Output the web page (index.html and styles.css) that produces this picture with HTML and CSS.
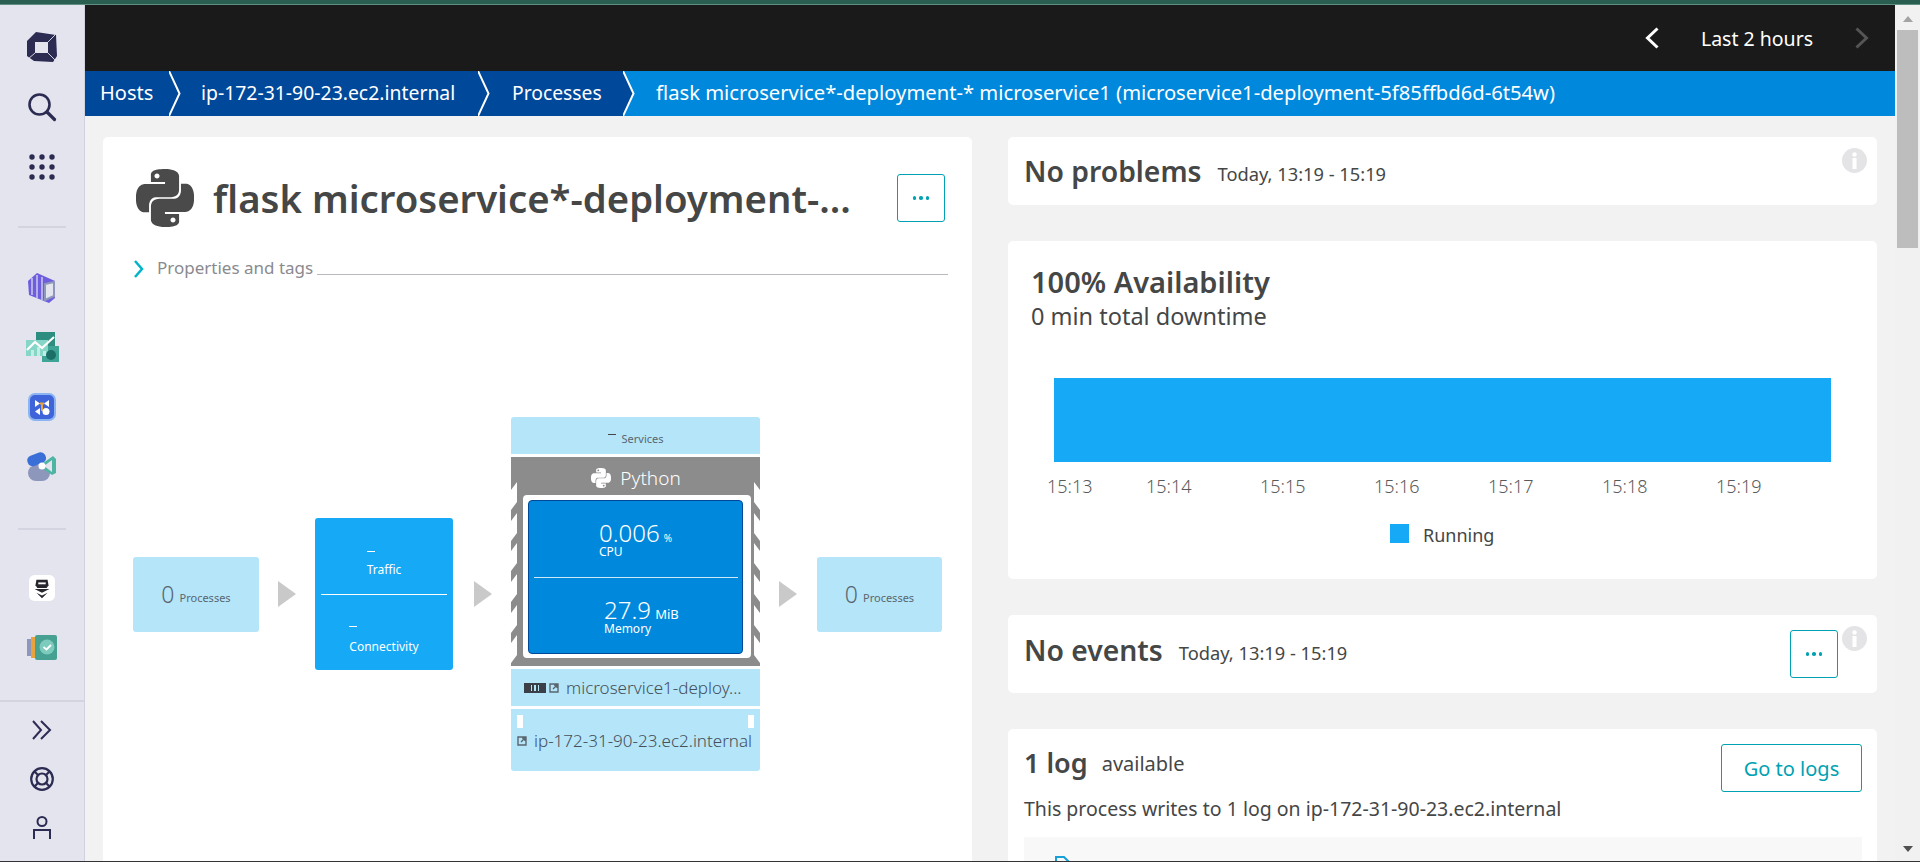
FILE: index.html
```html
<!DOCTYPE html>
<html lang="en">
<head>
<meta charset="utf-8">
<title>flask microservice</title>
<link rel="stylesheet" href="styles.css">
</head>
<body>
<svg class="defs" width="0" height="0"><defs>
<path id="py" d="M14.25.18l.9.2.73.26.59.3.45.32.34.34.25.34.16.33.1.3.04.26.02.2-.01.13V8.5l-.05.63-.13.55-.21.46-.26.38-.3.31-.33.25-.35.19-.35.14-.33.1-.3.07-.26.04-.21.02H8.77l-.69.05-.59.14-.5.22-.41.27-.33.32-.27.35-.2.36-.15.37-.1.35-.07.32-.04.27-.02.21v3.06H3.17l-.21-.03-.28-.07-.32-.12-.35-.18-.36-.26-.36-.36-.35-.46-.32-.59-.28-.73-.21-.88-.14-1.05-.05-1.23.06-1.22.16-1.04.24-.87.32-.71.36-.57.4-.44.42-.33.42-.24.4-.16.36-.1.32-.05.24-.01h.16l.06.01h8.16v-.83H6.18l-.01-2.75-.02-.37.05-.34.11-.31.17-.28.25-.26.31-.23.38-.2.44-.18.51-.15.58-.12.64-.1.71-.06.77-.04.84-.02 1.27.05zm-6.3 1.98l-.23.33-.08.41.08.41.23.34.33.22.41.09.41-.09.33-.22.23-.34.08-.41-.08-.41-.23-.33-.33-.22-.41-.09-.41.09zm13.09 3.95l.28.06.32.12.35.18.36.27.36.35.35.47.32.59.28.73.21.88.14 1.04.05 1.23-.06 1.23-.16 1.04-.24.86-.32.71-.36.57-.4.45-.42.33-.42.24-.4.16-.36.09-.32.05-.24.02-.16-.01h-8.22v.82h5.84l.01 2.76.02.36-.05.34-.11.31-.17.29-.25.25-.31.24-.38.2-.44.17-.51.15-.58.13-.64.09-.71.07-.77.04-.84.01-1.27-.04-1.07-.14-.9-.2-.73-.25-.59-.3-.45-.33-.34-.34-.25-.34-.16-.33-.1-.3-.04-.25-.02-.2.01-.13v-5.34l.05-.64.13-.54.21-.46.26-.38.3-.32.33-.24.35-.2.35-.14.33-.1.3-.06.26-.04.21-.02.13-.01h5.84l.69-.05.59-.14.5-.21.41-.28.33-.32.27-.35.2-.36.15-.36.1-.35.07-.32.04-.28.02-.21V6.07h2.09l.14.01zm-6.47 14.25l-.23.33-.08.41.08.41.23.33.33.23.41.08.41-.08.33-.23.23-.33.08-.41-.08-.41-.23-.33-.33-.23-.41-.08-.41.08z"/>
<g id="info"><circle cx="12.5" cy="12.5" r="12.5" fill="#e4e4e6"/><circle cx="12.5" cy="6.5" r="2.2" fill="#fff"/><rect x="10.5" y="10" width="4" height="11" fill="#fff"/></g>
<path id="ext" d="M1 1h8v8H1zM4 6l4-4M5 2h3v3" fill="none" stroke="#5a6570" stroke-width="1.4"/>
</defs></svg>
<div class="strip"></div>
<div class="app">
  <nav class="sidebar">
    <div class="nav-group nav-top">
      <span class="nav-item"><svg width="30" height="30" viewBox="0 0 30 30"><path d="M9 0l20 3 1 21-4 6-19-1-7-5L0 9z" fill="#2c2b52"/><path d="M8 10h13v11H8z" fill="#e3e4ee"/><path d="M21 10l7-7M21 21l7 7M8 21l-7 6" stroke="#e3e4ee" stroke-width=".9"/></svg></span>
      <span class="nav-item"><svg width="30" height="30" viewBox="0 0 30 30"><circle cx="12.5" cy="12.5" r="10" fill="none" stroke="#2c2b52" stroke-width="2.6"/><path d="M20 20l7.5 7.5" stroke="#2c2b52" stroke-width="3.2" stroke-linecap="round"/></svg></span>
      <span class="nav-item"><svg width="28" height="26" viewBox="0 0 28 26" fill="#2c2b52"><circle cx="4" cy="3" r="2.7"/><circle cx="14" cy="3" r="2.7"/><circle cx="24" cy="3" r="2.7"/><circle cx="4" cy="13" r="2.7"/><circle cx="14" cy="13" r="2.7"/><circle cx="24" cy="13" r="2.7"/><circle cx="4" cy="23" r="2.7"/><circle cx="14" cy="23" r="2.7"/><circle cx="24" cy="23" r="2.7"/></svg></span>
    </div>
    <div class="nav-rule"></div>
    <div class="nav-group nav-apps">
      <span class="nav-app"><svg width="28" height="31" viewBox="0 0 28 31"><path d="M0 9l9-8 18 8v17l-6 5L1 23z" fill="#6f5de0"/><path d="M4 6v17M9 3v23M14 5v23" stroke="#e3e4ee" stroke-width="1.200"/><path d="M17 12l9-2v14l-9 4z" fill="#e3e4ee" stroke="#8d96bb" stroke-width="2"/></svg></span>
      <span class="nav-app"><svg width="33" height="30" viewBox="0 0 33 30"><rect x="10" y="0" width="19" height="17" fill="#2d8d80"/><rect x="16" y="14" width="17" height="16" fill="#3ea596"/><rect x="0" y="8" width="22" height="16" fill="#86d6c8"/><path d="M5 24v-6h3v6zM11 24v-9h3v9zM17 24v-5h3v5z" fill="#c3ece5"/><path d="M1 18l8-8 7 6 12-11" fill="none" stroke="#fff" stroke-width="2.2"/><circle cx="25" cy="23" r="5" fill="#1c6f66"/></svg></span>
      <span class="nav-app"><svg width="28" height="28" viewBox="0 0 28 28"><rect x="1" y="1" width="26" height="26" rx="6" fill="#3f63d8" stroke="#8ab4f2" stroke-width="2"/><path d="M7 7l5 3.500L7 14zM21 7l-5 3.500 5 3.500z" fill="#fff"/><path d="M12 10.500h4M14 10v8" stroke="#e8a33d" stroke-width="2"/><path d="M12 15l-5 3.500 5 3.500z" fill="#fff"/><circle cx="18" cy="18.500" r="3.500" fill="#fff"/></svg></span>
      <span class="nav-app"><svg width="30" height="32" viewBox="0 0 30 32"><rect x="1" y="15" width="22" height="16" rx="8" fill="#8d96bb"/><rect x="0" y="4" width="19" height="11" rx="5" transform="rotate(-20 9 9)" fill="#3b6fd8"/><path d="M12 16l14-10 3 3v14l-4 2z" fill="#4fb5a3"/><path d="M17 16l8-6v12z" fill="#e3e4ee"/><circle cx="15" cy="16" r="3.500" fill="#fff"/></svg></span>
    </div>
    <div class="nav-rule"></div>
    <div class="nav-group nav-apps nav-apps-2">
      <span class="nav-app"><svg width="26" height="26" viewBox="0 0 28 28"><rect width="28" height="28" rx="6" fill="#fff"/><path d="M8 5h12l1 6-2 3H9l-2-3z" fill="#26262e"/><path d="M10 8h8v2h-8z" fill="#fff"/><path d="M6 15h16l-8 4zM8 19l6 3 6-3-6 6z" fill="#26262e"/></svg></span>
      <span class="nav-app"><svg width="30" height="25" viewBox="0 0 30 25"><rect x="0" y="4" width="5" height="17" fill="#8d96bb"/><rect x="4" y="2" width="6" height="21" fill="#e8a33d"/><rect x="8" y="0" width="22" height="25" rx="2" fill="#46a192"/><circle cx="20" cy="12" r="7.500" fill="#7dcbbd"/><path d="M16.500 12l3 2.500 4.500-4.500" fill="none" stroke="#fff" stroke-width="1.800"/></svg></span>
    </div>
    <div class="nav-foot">
      <span class="nav-low"><svg width="20" height="20" viewBox="0 0 20 20" fill="none" stroke="#2c2b52" stroke-width="2"><path d="M1 1l8 9-8 9M9 1l9 9-9 9"/></svg></span>
      <span class="nav-low"><svg width="24" height="24" viewBox="0 0 24 24" fill="none" stroke="#2c2b52" stroke-width="2.200"><circle cx="12" cy="12" r="10.800"/><circle cx="12" cy="12" r="5.500"/><path d="M4.500 4.500l4 4M19.500 4.500l-4 4M4.500 19.500l4-4M19.500 19.500l-4-4"/></svg></span>
      <span class="nav-low"><svg width="20" height="23" viewBox="0 0 20 23" fill="none" stroke="#2c2b52" stroke-width="2"><circle cx="10" cy="5.500" r="4.500"/><path d="M2 23v-9h16v9"/></svg></span>
    </div>
  </nav>
  <div class="main">
    <header class="topbar">
      <svg class="tb-arrow" width="14" height="22" viewBox="0 0 14 22" fill="none" stroke="#fff" stroke-width="3"><path d="M12.500 1.500L2.500 11l10 9.500"/></svg>
      <span class="tb-label">Last 2 hours</span>
      <svg class="tb-arrow" width="14" height="22" viewBox="0 0 14 22" fill="none" stroke="#555" stroke-width="3"><path d="M1.500 1.500L11.500 11l-10 9.500"/></svg>
    </header>
    <div class="crumbs">
      <span class="crumb crumb-1">Hosts</span>
      <svg class="chev" width="12" height="45" viewBox="0 0 12 45"><path d="M0 0l10.500 22.500L0 45" fill="none" stroke="#fff" stroke-width="2"/></svg>
      <span class="crumb crumb-2">ip-172-31-90-23.ec2.internal</span>
      <svg class="chev" width="12" height="45" viewBox="0 0 12 45"><path d="M0 0l10.500 22.500L0 45" fill="none" stroke="#fff" stroke-width="2"/></svg>
      <span class="crumb crumb-3">Processes</span>
      <svg class="chev chev-last" width="12" height="45" viewBox="0 0 12 45"><path d="M0 0l10.500 22.500L0 45z" fill="#00489a"/><path d="M0 0l10.500 22.500L0 45" fill="none" stroke="#fff" stroke-width="2"/></svg>
      <span class="crumb crumb-last">flask microservice*-deployment-* microservice1 (microservice1-deployment-5f85ffbd6d-6t54w)</span>
    </div>
    <div class="content">
      <section class="card card-left">
        <div class="title-row">
          <svg class="title-logo" width="58" height="58" viewBox="0 0 24 24" fill="#4a4a4a"><use href="#py"/></svg>
          <h1 class="title">flask microservice*-deployment-...</h1>
          <button class="btn btn-square"><span class="dots"><i></i><i></i><i></i></span></button>
        </div>
        <div class="props">
          <svg width="12" height="18" viewBox="0 0 12 18" fill="none" stroke="#00b4c8" stroke-width="2.500"><path d="M2 1l7 8-7 8"/></svg>
          <span class="props-label">Properties and tags</span>
          <span class="props-line"></span>
        </div>
        <div class="diagram">
          <div class="side-box"><span class="zero">0</span><span class="side-label">Processes</span></div>
          <span class="tri"></span>
          <div class="conn">
            <div class="conn-cell conn-traffic"><span class="dash"></span><span>Traffic</span></div>
            <div class="conn-rule"></div>
            <div class="conn-cell conn-conn"><span class="dash"></span><span>Connectivity</span></div>
          </div>
          <span class="tri"></span>
          <div class="stack">
            <div class="services"><span class="dash dash-dark"></span><span>Services</span></div>
            <div class="proc">
              <div class="proc-head"><svg width="20" height="20" viewBox="0 0 24 24" fill="#fff"><use href="#py"/></svg><span>Python</span></div>
              <div class="proc-frame">
                <div class="proc-inner">
                  <div class="metric metric-cpu"><div><span class="m-val">0.006</span> <span class="m-unit m-pct">%</span></div><div class="m-label">CPU</div></div>
                  <div class="m-rule"></div>
                  <div class="metric metric-mem"><div><span class="m-val">27.9</span> <span class="m-unit">MiB</span></div><div class="m-label">Memory</div></div>
                </div>
              </div>
            </div>
            <div class="deploy">
              <span class="pods"><i></i><i></i><i></i></span>
              <svg width="10" height="10" viewBox="0 0 10 10"><use href="#ext"/></svg>
              <span>microservice1-deploy...</span>
            </div>
            <div class="host">
              <span class="host-marks"><span class="mark"></span><span class="mark"></span></span>
              <div class="host-name"><svg width="10" height="10" viewBox="0 0 10 10"><use href="#ext"/></svg><span>ip-172-31-90-23.ec2.internal</span></div>
            </div>
          </div>
          <span class="tri"></span>
          <div class="side-box side-box-right"><span class="zero">0</span><span class="side-label">Processes</span></div>
        </div>
      </section>
      <div class="right">
        <section class="card card-problems">
          <h2 class="h2">No problems</h2><span class="when">Today, 13:19 - 15:19</span>
          <svg class="info" width="25" height="25" viewBox="0 0 25 25"><use href="#info"/></svg>
        </section>
        <section class="card card-avail">
          <h2 class="avail-h">100% Availability</h2>
          <p class="avail-sub">0 min total downtime</p>
          <div class="avail-bar"></div>
          <div class="axis"><span>15:13</span><span class="t-2">15:14</span><span>15:15</span><span>15:16</span><span>15:17</span><span>15:18</span><span>15:19</span></div>
          <div class="legend"><span class="swatch"></span><span>Running</span></div>
        </section>
        <section class="card card-events">
          <h2 class="h2">No events</h2><span class="when">Today, 13:19 - 15:19</span>
          <button class="btn btn-square btn-events"><span class="dots"><i></i><i></i><i></i></span></button>
          <svg class="info info-ev" width="25" height="25" viewBox="0 0 25 25"><use href="#info"/></svg>
        </section>
        <section class="card card-log">
          <div class="log-head">
            <h2 class="h2 log-h">1 log</h2><span class="when">available</span>
            <button class="btn btn-logs">Go to logs</button>
          </div>
          <p class="log-text">This process writes to 1 log on ip-172-31-90-23.ec2.internal</p>
          <div class="log-box"><svg class="log-file" width="16" height="10" viewBox="0 0 16 10" fill="none" stroke="#18a0d8" stroke-width="2"><path d="M2 10V1h8l4 4v5"/></svg></div>
        </section>
      </div>
    </div>
  </div>
  <aside class="scroll">
    <span class="sc-up"></span>
    <span class="sc-thumb"></span>
    <span class="sc-down"></span>
  </aside>
</div>
<div class="baseline"></div>
</body>
</html>
```
FILE: styles.css
```css
* { box-sizing: border-box; }
html, body { margin: 0; height: 862px; overflow: hidden; }
body { font-family: "Noto Sans", "Open Sans", sans-serif; color: #454646; background: #f2f2f2; display: flex; flex-direction: column; }
.defs { position: absolute; }
h1, h2, p { margin: 0; }
.strip { height: 5px; flex: none; background: #2a5e50; border-bottom: 1px solid #5f8f80; }
.app { flex: 1; display: flex; min-height: 0; }
.baseline { height: 1px; flex: none; background: #333; }

.sidebar { width: 85px; flex: none; background: #e3e4ee; border-right: 1px solid #d0d2e0; display: flex; flex-direction: column; }
.nav-group { display: flex; flex-direction: column; align-items: center; }
.nav-top { padding: 12px 0 29px; }
.nav-item { height: 60px; display: flex; align-items: center; justify-content: center; }
.nav-rule { width: 48px; height: 2px; background: #d3d4e0; margin-left: 18px; flex: none; }
.nav-apps { padding: 30px 0 32px; }
.nav-apps-2 { padding: 28px 0 0; }
.nav-app { height: 59.500px; flex: none; display: flex; align-items: center; justify-content: center; }
.nav-foot { margin-top: auto; border-top: 2px solid #d3d4e0; padding: 4px 0 0; height: 161px; display: flex; flex-direction: column; align-items: center; }
.nav-low { height: 48.500px; flex: none; display: flex; align-items: center; justify-content: center; }

.main { flex: 1; min-width: 0; display: flex; flex-direction: column; }
.topbar { height: 66px; flex: none; background: #1a1a1a; color: #fff; display: flex; align-items: center; justify-content: flex-end; padding-right: 26px; }
.tb-label { font-size: 19.500px; width: 196px; text-align: center; }
.crumbs { height: 45px; flex: none; background: #0089dc; color: #fff; font-size: 20px; display: flex; align-items: center; }
.crumb { height: 45px; line-height: 43px; background: #00489a; white-space: nowrap; }
.chev { flex: none; background: #00489a; }
.chev-last { background: #0089dc; }
.crumb-1 { padding-left: 15px; width: 84px; }
.crumb-2 { padding-left: 20px; width: 297px; font-size: 19.400px; }
.crumb-3 { padding-left: 22px; width: 133px; font-size: 19.300px; }
.crumb-last { background: none; padding-left: 21px; font-size: 20.220px; }

.content { flex: 1; min-height: 0; display: grid; grid-template-columns: 869px 869px; gap: 36px; padding: 21px 18px 0; overflow: hidden; }
.card { background: #fff; border-radius: 5px; position: relative; }
.right { display: flex; flex-direction: column; gap: 36px; min-height: 0; }

.card-left { padding: 32px 24px 0 30px; overflow: hidden; border-radius: 5px 5px 0 0; }
.title-row { display: flex; align-items: flex-start; height: 57px; }
.title-logo { margin-left: 3px; flex: none; }
.title { font-size: 38.300px; font-weight: 600; line-height: 50px; margin: 4px 0 0 19px; width: 684px; white-space: nowrap; }
.btn { font-family: inherit; background: #fff; border: 1px solid #00a1b2; border-radius: 3px; color: #00a1b2; padding: 0; display: flex; align-items: center; justify-content: center; }
.btn-square { width: 48px; height: 48px; flex: none; }
.title-row .btn-square { margin-top: 5px; }
.dots { display: flex; gap: 3px; }
.dots i { width: 3.500px; height: 3.500px; background: #00a1b2; border-radius: 50%; }

.props { display: flex; align-items: center; height: 20px; margin-top: 33px; }
.props-label { font-size: 17px; color: #8a8a8f; margin-left: 12px; line-height: 20px; margin-top: -2px; }
.props-line { flex: 1; height: 1px; background: #b9b9bd; margin: 10px 0 0 4px; }

.diagram { display: flex; align-items: center; margin-top: 138px; }
.side-box { width: 126px; height: 75px; background: #b4e5f9; border-radius: 3px; display: flex; align-items: center; justify-content: center; gap: 5px; color: #5a6570; }
.side-box-right { width: 125px; margin-left: 1px; }
.zero { font-size: 23px; font-weight: 300; }
.side-label { font-size: 11px; padding-top: 6px; }
.tri { width: 0; height: 0; border-left: 18px solid #c9c9c9; border-top: 13.500px solid transparent; border-bottom: 13.500px solid transparent; margin: 0 19px; }
.conn { width: 138px; height: 152px; margin-right: 2px; background: #16a9f6; border-radius: 3px; color: #fff; font-size: 12px; display: flex; flex-direction: column; align-items: center; }
.conn-cell { flex: 1; display: flex; flex-direction: column; justify-content: center; align-items: flex-start; gap: 11px; padding-top: 17px; }
.conn-traffic { gap: 9px; }
.conn-rule { width: 126px; height: 1px; background: #fff; flex: none; }
.dash { display: block; width: 8px; height: 1px; background: #fff; }
.dash-dark { background: #454646; }

.stack { width: 249px; display: flex; flex-direction: column; align-items: center; }
.services { width: 249px; height: 37px; background: #b4e5f9; border-radius: 3px 3px 0 0; font-size: 11px; color: #5a6570; display: flex; align-items: center; justify-content: center; gap: 6px; padding-top: 6px; }
.services .dash { margin-top: -8px; }
.proc { width: 249px; height: 209px; margin-top: 3px; background: #8c8c8c; padding: 0 9px 8px 12px; display: flex; flex-direction: column;
  clip-path: polygon(0 0, 249px 0, 249px 33px, 243px 25px, 243px 45px, 249px 53px, 249px 64px, 243px 56px, 243px 76px, 249px 84px, 249px 94px, 243px 86px, 243px 106px, 249px 114px, 249px 125px, 243px 117px, 243px 137px, 249px 145px, 249px 156px, 243px 148px, 243px 168px, 249px 176px, 249px 186px, 243px 178px, 243px 198px, 249px 206px, 249px 209px, 0 209px, 0 206px, 6px 198px, 6px 178px, 0 186px, 0 176px, 6px 168px, 6px 148px, 0 156px, 0 145px, 6px 137px, 6px 117px, 0 125px, 0 114px, 6px 106px, 6px 86px, 0 94px, 0 84px, 6px 76px, 6px 56px, 0 64px, 0 53px, 6px 45px, 6px 25px, 0 33px); }
.proc-head { height: 38px; flex: none; display: flex; align-items: center; justify-content: center; gap: 9px; color: #fff; font-size: 19px; font-weight: 300; padding: 4px 2px 0 0; }
.proc-frame { flex: 1; background: #fff; border-radius: 4px; padding: 5px 8px 4px 5px; }
.proc-inner { height: 100%; background: #0089dc; border: 1px solid #00489a; border-radius: 4px; color: #fff; display: flex; flex-direction: column; align-items: center; }
.metric { flex: 1; display: flex; flex-direction: column; justify-content: center; line-height: 1; }
.metric-cpu { width: 100%; padding: 2px 0 0 70px; }
.metric-mem { width: 100%; padding: 2px 0 0 75px; }
.m-val { font-size: 24px; font-weight: 300; }
.m-unit { font-size: 13px; }
.m-pct { font-size: 10px; }
.m-label { font-size: 12px; margin-top: 1px; }
.m-rule { width: 204px; height: 1px; flex: none; background: #cfe8f8; }

.deploy { width: 249px; height: 37px; margin-top: 3px; background: #b4e5f9; display: flex; align-items: center; padding-left: 13px; font-size: 17px; font-weight: 300; color: #45505a; white-space: nowrap; }
.pods { width: 22px; height: 10px; background: #3b4048; display: flex; align-items: center; justify-content: center; gap: 2px; margin-right: 3px; }
.pods i { width: 1.500px; height: 6px; background: #b4e5f9; }
.deploy svg { margin-right: 7px; }
.host { width: 249px; height: 62px; margin-top: 3px; background: #b4e5f9; border-radius: 0 0 3px 3px; padding: 6px 5px 0 6px; font-size: 17px; font-weight: 300; color: #45505a; white-space: nowrap; position: relative; }
.host-marks { display: flex; justify-content: space-between; height: 13px; padding-right: 1px; }
.mark { width: 6px; height: 13px; background: #fff; }
.host-name { display: flex; align-items: center; gap: 7px; margin-top: 0; line-height: 26px; }

.card-problems { height: 68px; flex: none; display: flex; align-items: center; padding: 0 0 0 16px; }
.h2 { font-size: 28.300px; font-weight: 600; line-height: 38px; }
.when { font-size: 18.300px; margin-left: 16px; padding-top: 5px; }
.info { position: absolute; left: 834px; top: 11px; }
.info-ev { top: 11px; }

.card-avail { height: 338px; flex: none; padding: 23px 0 0 23px; }
.avail-h { font-size: 29px; font-weight: 600; line-height: 36px; }
.avail-sub { font-size: 23.500px; line-height: 26px; margin-top: 3px; }
.avail-bar { width: 777px; height: 84px; background: #16a9f6; margin: 49px 0 0 23px; }
.axis { display: flex; margin: 14px 0 0 16px; font-size: 18px; color: #5a5a5a; gap: 68px; line-height: 20px; font-weight: 300; }
.axis span { width: 46px; flex: none; }
.axis .t-2 { margin-left: -15px; }
.legend { display: flex; align-items: center; gap: 14px; margin: 27px 0 0 359px; font-size: 18px; }
.swatch { width: 19px; height: 19px; background: #16a9f6; margin-top: -4px; }

.card-events { height: 78px; flex: none; display: flex; align-items: center; padding: 0 0 8px 16px; }
.btn-events { position: absolute; left: 782px; top: 15px; }

.card-log { flex: 1; padding: 15px 15px 0 16px; border-radius: 5px 5px 0 0; overflow: hidden; }
.log-head { display: flex; align-items: flex-start; height: 48px; }
.log-h { font-size: 27px; }
.log-head .when { font-size: 20px; margin: 6px 0 0 14px; padding-top: 0; }
.btn-logs { margin-left: auto; width: 141px; height: 48px; font-size: 20px; }
.log-text { font-size: 19.500px; line-height: 24px; margin-top: 5px; }
.log-box { height: 40px; background: #f8f8f8; margin-top: 16px; padding: 19px 0 0 30px; }
.log-file { display: block; }

.scroll { width: 25px; flex: none; background: #f1f1f1; position: relative; display: flex; flex-direction: column; align-items: center; }
.sc-up { width: 0; height: 0; border-left: 5.500px solid transparent; border-right: 5.500px solid transparent; border-bottom: 6px solid #a3a3a3; margin-top: 11px; }
.sc-thumb { width: 21px; height: 218px; background: #bdbdbd; margin-top: 8px; }
.sc-down { width: 0; height: 0; border-left: 5.500px solid transparent; border-right: 5.500px solid transparent; border-top: 6px solid #505050; margin-top: auto; margin-bottom: 9px; }
```
